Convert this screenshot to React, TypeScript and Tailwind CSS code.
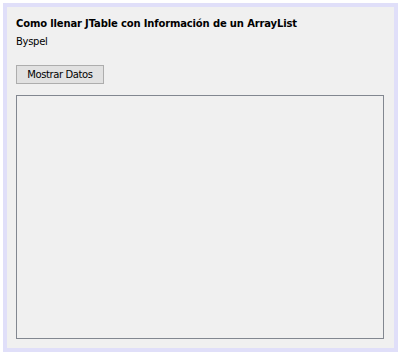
export default function App() {
  return (
    <div className="w-[400px] h-[356px] bg-white pt-[3px] pl-[3px] pr-[2px] pb-[4px] font-['DejaVu_Sans',sans-serif] text-black">
      <div className="h-full border-4 border-[#e0dff9] bg-[#f0f0f0] flex flex-col pl-[9px] pr-[10px] pt-[9px] pb-[9px]">
        <h1 className="text-[10px] font-bold leading-[16px] tracking-[-0.15px]">
          Como llenar JTable con Información de un ArrayList
        </h1>
        <p className="text-[10px] leading-[14px] mt-[3px] tracking-[-0.3px]">Byspel</p>
        <div className="mt-[12px]">
          <button className="w-[88px] h-[19px] bg-[#e1e1e1] border border-[#adadad] text-[10px] leading-[17px] tracking-[-0.4px]">
            Mostrar Datos
          </button>
        </div>
        <div className="mt-[10px] flex-1 border border-[#828790] bg-[#f0f0f0]" />
      </div>
    </div>
  );
}
